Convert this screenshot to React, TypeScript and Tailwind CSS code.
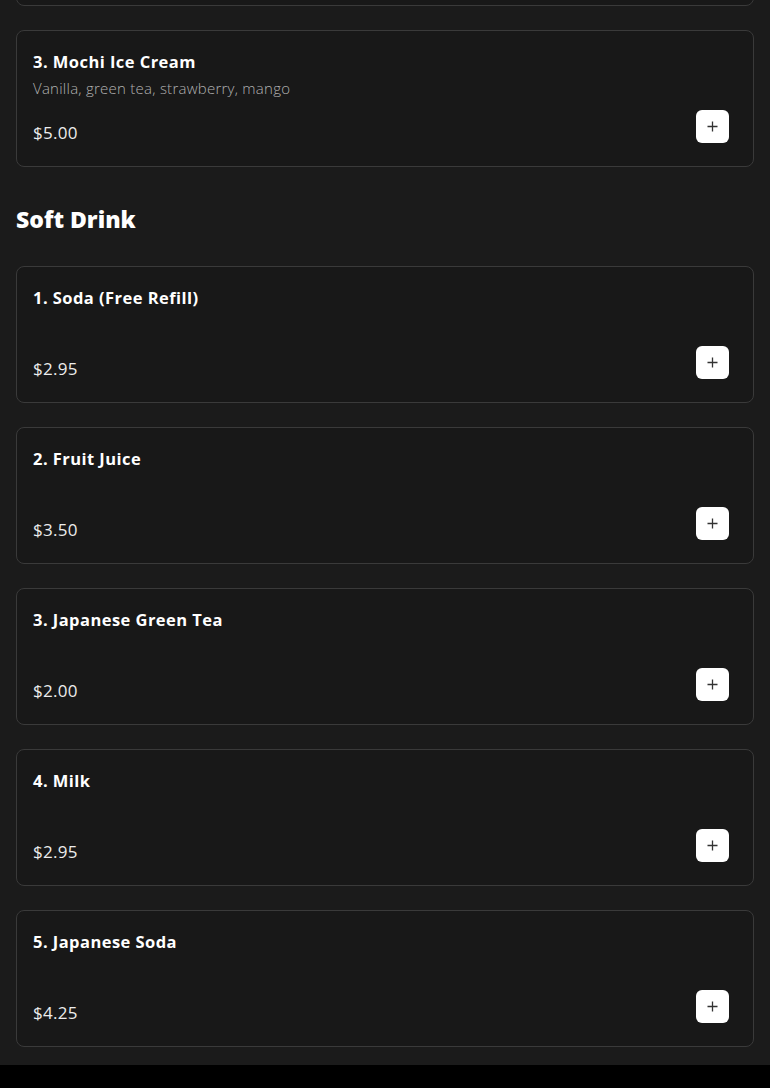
import React from "react";

type Item = { name: string; desc?: string; price: string };

const drinks: Item[] = [
  { name: "1. Soda (Free Refill)", price: "$2.95" },
  { name: "2. Fruit Juice", price: "$3.50" },
  { name: "3. Japanese Green Tea", price: "$2.00" },
  { name: "4. Milk", price: "$2.95" },
  { name: "5. Japanese Soda", price: "$4.25" },
];

function PlusIcon() {
  return (
    <svg width="11" height="11" viewBox="0 0 11 11" fill="none">
      <path d="M5.5 0.5v10M0.5 5.5h10" stroke="#333" strokeWidth="1.3" />
    </svg>
  );
}

function Card({ item }: { item: Item }) {
  return (
    <div className="rounded-lg border border-[#3a3a3a] bg-[#181818] px-4 pt-[17px] pb-[21px]">
      <div className="text-[16.5px] font-bold leading-[28px] tracking-[0.45px] text-white">{item.name}</div>
      <div className="h-[24px] text-[15px] font-light leading-[24px] tracking-[0.25px] text-[#b0b0b0]">{item.desc ?? ""}</div>
      <div className="mt-[10px] flex items-end justify-between">
        <div className="text-[17px] leading-[24px] tracking-[0.3px] text-[#ececec]">{item.price}</div>
        <button className="mb-[2px] mr-[8px] flex h-[33px] w-[33px] items-center justify-center rounded-md bg-white">
          <PlusIcon />
        </button>
      </div>
    </div>
  );
}

export default function App() {
  return (
    <div className="min-h-screen bg-black" style={{ fontFamily: '"Open Sans", "Noto Sans", sans-serif' }}>
      <div className="overflow-hidden bg-[#1b1b1b] px-4 pb-[18px]">
        <div className="-mt-[131px] h-[137px] rounded-lg border border-[#3a3a3a] bg-[#181818]" />
        <div className="mt-[24px]">
          <Card item={{ name: "3. Mochi Ice Cream", desc: "Vanilla, green tea, strawberry, mango", price: "$5.00" }} />
        </div>
        <h2 className="mt-[37px] mb-[32px] text-[23px] font-extrabold leading-[30px] text-white">Soft Drink</h2>
        <div className="flex flex-col gap-[24px]">
          {drinks.map((d) => (
            <Card key={d.name} item={d} />
          ))}
        </div>
      </div>
    </div>
  );
}
